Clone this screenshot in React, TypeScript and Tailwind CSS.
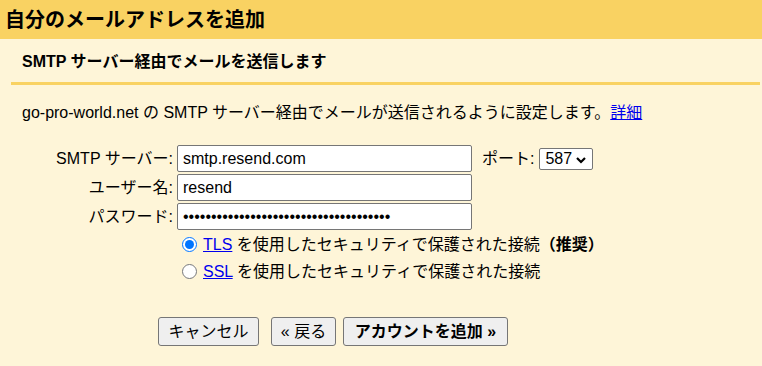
import React from "react";

const font = { fontFamily: '"Liberation Sans", Arial, "Noto Sans CJK JP", sans-serif' };

export default function App() {
  return (
    <div className="w-[762px] h-[366px] bg-[#fef5d8] text-black overflow-hidden" style={font}>
      <div className="h-[39px] bg-[#f9d262] pl-[5px] flex items-center">
        <h1 className="text-[20px] leading-[24px] font-bold">自分のメールアドレスを追加</h1>
      </div>
      <div className="ml-[11px] mr-[2px] pl-[11px] pt-[12px] pb-[9px] border-b-[3px] border-[#f9d262]">
        <h2 className="text-[16px] leading-[22px] font-bold">SMTP サーバー経由でメールを送信します</h2>
      </div>
      <p className="mt-[17px] pl-[22px] text-[16px] leading-[22px]">
        go-pro-world.net の SMTP サーバー経由でメールが送信されるように設定します。
        <a href="#" className="text-[#0000ee] underline">詳細</a>
      </p>
      <div className="mt-[21px] flex flex-col gap-[2px] text-[16px]">
        <div className="flex items-center h-[27px]">
          <label className="w-[175px] text-right pr-[2px] leading-[22px]">SMTP サーバー:</label>
          <input
            readOnly
            value="smtp.resend.com"
            className="ml-[2px] w-[295px] h-[27px] bg-white border border-[#767676] rounded-[2px] px-[5px] text-[16px] leading-[20px] outline-none"
          />
          <span className="ml-[10px] leading-[22px]">ポート:</span>
          <div className="ml-[5px] mt-[1px] w-[54px] h-[22px] bg-white border border-[#767676] rounded-[2px] flex items-center pl-[5px] gap-[3px]">
            <span className="leading-[20px]">587</span>
            <svg width="12" height="10" viewBox="0 0 12 10" className="mt-[1px]">
              <path d="M2 3 L6 7 L10 3" fill="none" stroke="#000" strokeWidth="2.2" />
            </svg>
          </div>
        </div>
        <div className="flex items-center h-[27px]">
          <label className="w-[175px] text-right pr-[2px] leading-[22px]">ユーザー名:</label>
          <input
            readOnly
            value="resend"
            className="ml-[2px] w-[295px] h-[27px] bg-white border border-[#767676] rounded-[2px] px-[5px] text-[16px] leading-[20px] outline-none"
          />
        </div>
        <div className="flex items-center h-[27px]">
          <label className="w-[175px] text-right pr-[2px] leading-[22px]">パスワード:</label>
          <input
            readOnly
            type="password"
            value="abcdefghijklmnopqrstuvwxyzabcdefghijk"
            className="ml-[2px] w-[295px] h-[27px] bg-white border border-[#767676] rounded-[2px] px-[5px] text-[16px] leading-[20px] outline-none"
          />
        </div>
      </div>
      <div className="mt-[1px] ml-[182px] flex flex-col text-[16px]">
        <label className="flex items-center h-[27px]">
          <input type="radio" name="sec" defaultChecked className="w-[15px] h-[15px] m-0 accent-[#0075ff]" />
          <span className="ml-[6px] leading-[22px]">
            <a href="#" className="text-[#0000ee] underline">TLS</a> を使用したセキュリティで保護された接続<span className="font-bold">（推奨）</span>
          </span>
        </label>
        <label className="flex items-center h-[27px]">
          <input type="radio" name="sec" className="w-[15px] h-[15px] m-0" />
          <span className="ml-[6px] leading-[22px]">
            <a href="#" className="text-[#0000ee] underline">SSL</a> を使用したセキュリティで保護された接続
          </span>
        </label>
      </div>
      <div className="mt-[32px] ml-[158px] flex text-[16px]">
        <button className="w-[101px] h-[29px] bg-[#efefef] border border-[#767676] rounded-[3px] leading-[20px]">キャンセル</button>
        <button className="ml-[12px] w-[65px] h-[29px] bg-[#efefef] border border-[#767676] rounded-[3px] leading-[20px]">« 戻る</button>
        <button className="ml-[7px] w-[165px] h-[29px] bg-[#efefef] border border-[#767676] rounded-[3px] leading-[20px] font-bold">アカウントを追加 »</button>
      </div>
    </div>
  );
}
